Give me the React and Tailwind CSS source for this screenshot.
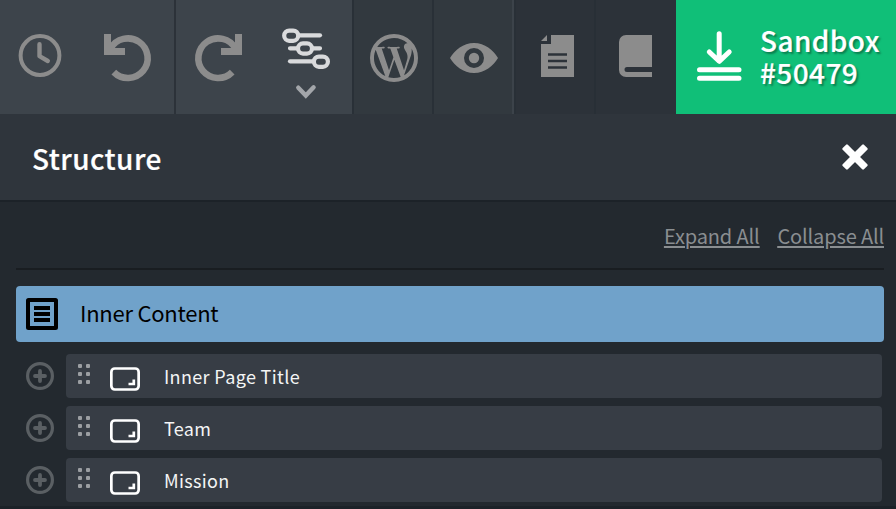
import { FaWordpressSimple } from "react-icons/fa";

const rows = ["Inner Page Title", "Team", "Mission"];

function HistoryIcons() {
  return (
    <svg width="174" height="114" viewBox="0 0 174 114" fill="none" stroke="#8c8c8c">
      <circle cx="40" cy="55.5" r="19.4" strokeWidth="4" />
      <path d="M39.5 44.2V56.2L47.8 61" strokeWidth="4.4" strokeLinecap="round" strokeLinejoin="round" />
      <path d="M113.8 72.1A19.8 19.8 0 1 0 110.6 48.5" strokeWidth="6.6" />
      <path d="M104 34H111V48H125V55H104Z" fill="#8c8c8c" stroke="none" />
    </svg>
  );
}

function RedoAndStructureIcons() {
  return (
    <svg width="176" height="114" viewBox="176 0 176 114" fill="none">
      <path d="M232.2 72.1A19.8 19.8 0 1 1 235.4 48.5" stroke="#8c8c8c" strokeWidth="6.6" />
      <path d="M242 34H235V48H221V55H242Z" fill="#8c8c8c" />
      <g stroke="#d9dadc" strokeWidth="4.2" strokeLinecap="round">
        <rect x="284.2" y="30.6" width="14" height="10.2" rx="5" />
        <path d="M300 35.3H320" />
        <rect x="298" y="43.4" width="14" height="10.2" rx="5" />
        <path d="M290 48.3H297M313 48.3H320" />
        <rect x="313.9" y="56.6" width="14" height="10.2" rx="5" />
        <path d="M290 61.3H312" />
      </g>
      <path d="M298.3 87.7L305.8 95.6L313.6 87.3" stroke="#a3a6aa" strokeWidth="4.4" strokeLinecap="round" />
    </svg>
  );
}

function WordpressIcon() {
  return (
    <span className="flex size-12 items-center justify-center rounded-full border-[3px] border-[#8c8c8c]">
      <FaWordpressSimple className="size-[46px] shrink-0 text-[#8c8c8c]" />
    </span>
  );
}

function EyeIcon() {
  return (
    <svg width="48" height="30" viewBox="0 0 48 30" fill="#8c8c8c">
      <path fillRule="evenodd" d="M0 15C5 7 13 0 24 0S43 7 48 15C43 23 35 30 24 30S5 23 0 15ZM14 15a10 10 0 1 0 20 0a10 10 0 1 0-20 0Z" />
      <circle cx="24" cy="15" r="5.2" />
    </svg>
  );
}

function PageIcon() {
  return (
    <svg width="33" height="42" viewBox="0 0 33 42">
      <path d="M10 0H33V42H0V9H10ZM6 0V6H0Z" fill="#8c8c8c" />
      <path d="M7 19.5H26M7 26H26M7 32.5H26" stroke="#2c3239" strokeWidth="2.6" />
    </svg>
  );
}

function BookIcon() {
  return (
    <svg width="33" height="42" viewBox="0 0 33 42" fill="#8c8c8c">
      <path d="M7 0H33V32H8a2.5 2.5 0 0 0 0 5H33V42H7A7 7 0 0 1 0 35V7A7 7 0 0 1 7 0Z" />
    </svg>
  );
}

function SaveIcon() {
  return (
    <svg width="46" height="52" viewBox="696 30 46 52" fill="none" stroke="#fff" strokeWidth="5" strokeLinecap="round" strokeLinejoin="round">
      <path d="M719.2 33.8V61M709.3 52L719.2 61.3L729.2 52M699.5 69.7H739M699.5 78.2H739" />
    </svg>
  );
}

function ListIcon() {
  return (
    <svg width="32" height="32" viewBox="0 0 32 32" fill="none" stroke="#000" strokeWidth="4">
      <rect x="2" y="2" width="28" height="28" rx="0.5" />
      <path d="M8 10H24M8 16H24M8 22H24" />
    </svg>
  );
}

function Row({ label }) {
  return (
    <div className="flex h-11 items-center">
      <svg width="28" height="28" viewBox="0 0 28 28" fill="none" stroke="#5a5f63" className="mr-3 shrink-0">
        <circle cx="14" cy="14" r="12.4" strokeWidth="3.2" />
        <path d="M14 9V19M9 14H19" strokeWidth="3.8" strokeLinecap="round" />
      </svg>
      <div className="flex h-11 flex-1 rounded-[4px] bg-[#373d45]">
        <div className="ml-3 mt-[10px] grid h-5 w-3 grid-cols-2 gap-1">
          {[0, 1, 2, 3, 4, 5].map((i) => (
            <span key={i} className="size-1 rounded-[1px] bg-[#9b9ea2]" />
          ))}
        </div>
        <svg width="30" height="24" viewBox="0 0 30 24" fill="none" stroke="#fff" strokeWidth="2.7" className="ml-5 mt-[13px] shrink-0">
          <rect x="1.35" y="1.5" width="27.3" height="21" rx="3.4" />
          <path d="M23.8 12.5V17H18.5" />
        </svg>
        <span className="ml-6 whitespace-nowrap text-[18px] leading-11 tracking-[0.35px] text-[#f4f5f5]">{label}</span>
      </div>
    </div>
  );
}

export default function App() {
  return (
    <div className="flex h-[509px] w-[896px] flex-col overflow-hidden bg-[#23292f] font-['Noto_Sans_CJK_SC',sans-serif]">
      <nav className="flex h-[114px] shrink-0">
        <div className="w-[176px] border-r-2 border-[#2c3239] bg-[#3d444b]"><HistoryIcons /></div>
        <div className="w-[178px] border-r-2 border-[#293037] bg-[#3d444b]"><RedoAndStructureIcons /></div>
        <div className="flex w-20 items-center justify-center border-r-2 border-[#293037] bg-[#32393f] pt-0.5 pl-0.5"><WordpressIcon /></div>
        <div className="flex w-20 items-center justify-center border-r-2 border-[#3c434a] bg-[#32393f] pt-0.5 pl-0.5"><EyeIcon /></div>
        <div className="flex w-[82px] items-start border-x-2 border-l-[#293037] border-r-[#282f36] bg-[#2c3239] pl-[25px] pt-[35px]"><PageIcon /></div>
        <div className="flex w-20 items-start bg-[#2c3239] pl-[23px] pt-[35px]"><BookIcon /></div>
        <button className="flex flex-1 items-start bg-[#10bf78] pl-5 pt-[30px] text-left text-white">
          <SaveIcon />
          <span className="-mt-1.5 ml-[18px] whitespace-nowrap text-[28px] font-medium leading-8 tracking-[0.4px] [-webkit-text-stroke:0.2px_white] [text-shadow:2px_2px_2px_rgba(0,0,0,0.35)]">
            Sandbox<br />#50479
          </span>
        </button>
      </nav>
      <header className="flex h-[88px] shrink-0 justify-between border-b-2 border-[#1c2228] bg-[#2f353c] pl-8 pr-7">
        <h1 className="text-[28px] font-medium leading-[88px] tracking-[0.45px] text-white [-webkit-text-stroke:0.2px_white]">Structure</h1>
        <svg width="26" height="26" viewBox="-13 -13 26 26" fill="#fff" className="mt-[30px]">
          <rect x="-15" y="-3.6" width="30" height="7.2" rx="1.2" transform="rotate(45)" />
          <rect x="-15" y="-3.6" width="30" height="7.2" rx="1.2" transform="rotate(-45)" />
        </svg>
      </header>
      <main className="flex flex-1 flex-col pl-4 pr-3">
        <div className="flex h-[68px] shrink-0 justify-end gap-[18px] border-b-2 border-[#191d21] text-[20px] leading-[68px] tracking-[-0.15px] text-[#8a8e91] underline decoration-2 underline-offset-2">
          <a>Expand All</a>
          <a>Collapse All</a>
        </div>
        <div className="mt-4 flex h-14 shrink-0 rounded-[4px] bg-[#70a2ca] pl-[10px] pt-3">
          <ListIcon />
          <span className="-mt-1 ml-[22px] text-[22px] leading-9 tracking-[-0.25px] text-black">Inner Content</span>
        </div>
        <div className="mt-3 flex flex-col gap-2 pl-[10px] pr-0.5">
          {rows.map((label) => <Row key={label} label={label} />)}
        </div>
        <div className="-mx-4 mt-1 h-[3px] shrink-0 bg-[#1c2228]" />
      </main>
    </div>
  );
}
